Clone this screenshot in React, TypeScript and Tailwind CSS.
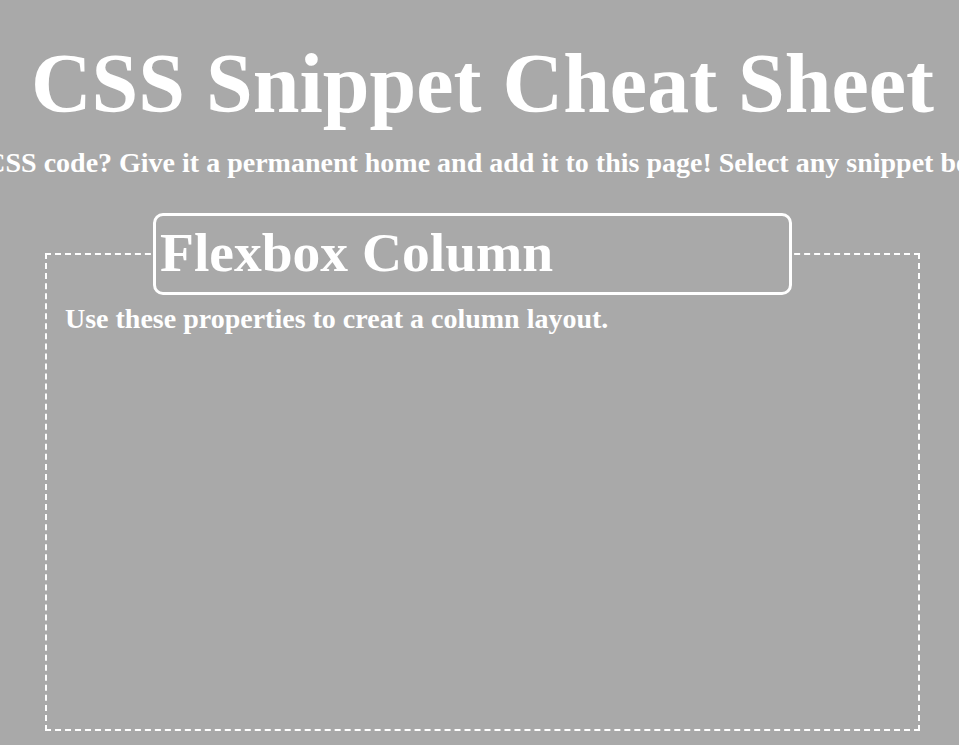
export default function App() {
  return (
    <div className="min-h-[745px] w-full overflow-hidden bg-[#a9a9a9] text-white font-['Liberation_Serif',serif] font-bold">
      <div className="flex flex-col items-center">
        <h1 className="mt-[34px] pl-[6px] text-[84px] leading-[100px] whitespace-nowrap">CSS Snippet Cheat Sheet</h1>
        <p className="mt-[12px] pr-[10px] text-[28px] leading-[34px] whitespace-nowrap">
          Got CSS code? Give it a permanent home and add it to this page! Select any snippet below.
        </p>
      </div>
      <fieldset className="ml-[45px] mt-[33px] w-[875px] h-[518px] border-2 border-dashed border-white px-[18px]">
        <legend className="ml-[88px] w-[639px] h-[82px] rounded-[10px] border-[3px] border-white px-[4px]">
          <h2 className="text-[55.5px] leading-[74px]">Flexbox Column</h2>
        </legend>
        <p className="mt-[8px] text-[28px] leading-[32px]">Use these properties to creat a column layout.</p>
      </fieldset>
    </div>
  );
}
